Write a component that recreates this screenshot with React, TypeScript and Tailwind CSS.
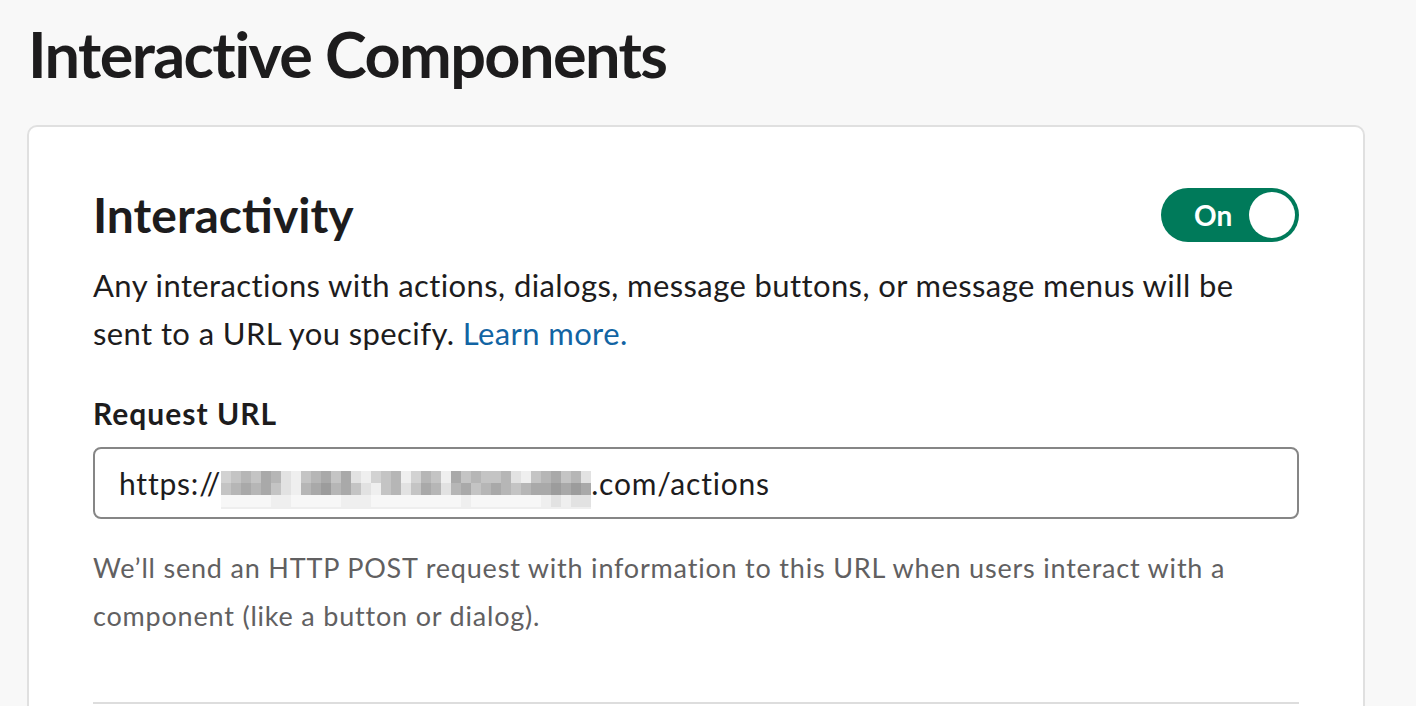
import React from 'react';

const shade: Record<string, string> = {
  a: 'bg-[#9c9c9c]',
  b: 'bg-[#a9a9a9]',
  c: 'bg-[#b6b6b6]',
  d: 'bg-[#c4c4c4]',
  e: 'bg-[#d2d2d2]',
  f: 'bg-[#e2e2e2]',
  g: 'bg-[#efefef]',
  h: 'bg-[#f7f7f7]',
  w: 'bg-white',
};

const mosaic = [
  'edcdbcfgdcbdbfgedcgecdgbdcddcfgdcbdcf',
  'dcbcbdfgcbacbdfgdcfdbcfcbdcbcdcbbabab',
  'hhhhhgghhhhhggghhhhhhhhhghhhhhhhgfgff',
];

function Blurred() {
  return (
    <span className="inline-flex flex-col self-start mt-[22px]">
      {mosaic.map((row, i) => (
        <span key={i} className="flex">
          {row.split('').map((c, j) => (
            <span key={j} className={`w-[10px] h-[12px] ${shade[c]}`} />
          ))}
        </span>
      ))}
      <span className="h-[2px] bg-[#eeeeee]" />
    </span>
  );
}

function Toggle() {
  return (
    <div className="flex items-center h-[54px] w-[138px] rounded-full bg-[#007a5a] pl-[33px] pr-[4px]">
      <span className="text-white font-bold text-[28px] leading-none">On</span>
      <span className="ml-auto w-[46px] h-[46px] rounded-full bg-white" />
    </div>
  );
}

export default function App() {
  return (
    <div className="min-h-screen bg-[#f8f8f8] pl-[27px] pr-[51px] pt-[16px] font-['Lato',sans-serif] text-[#1d1c1d]">
      <h1 className="text-[63px] font-bold leading-[76px] pl-[1px] tracking-[-1.6px]">Interactive Components</h1>
      <div className="mt-[33px] bg-white border-2 border-[#e0e0e0] rounded-[10px] px-[64px] pt-[60px] pb-[40px]">
        <div className="flex items-center justify-between">
          <h2 className="text-[48px] font-bold leading-[56px]">Interactivity</h2>
          <Toggle />
        </div>
        <p className="mt-[18px] text-[31px] leading-[48px] tracking-[0.4px]">
          Any interactions with actions, dialogs, message buttons, or message menus will be sent to a URL you specify.{' '}
          <a href="#" className="text-[#1264a3]">Learn more.</a>
        </p>
        <label className="block mt-[36px] text-[30px] font-bold leading-[40px] tracking-[1px]">Request URL</label>
        <div className="mt-[14px] h-[72px] border-2 border-[#868686] rounded-[8px] px-[24px] flex items-center text-[30px] tracking-[0.8px]">
          <span>https://</span>
          <Blurred />
          <span>.com/actions</span>
        </div>
        <p className="mt-[25px] text-[27px] leading-[48px] text-[#616061] tracking-[0.8px]">
          We’ll send an HTTP POST request with information to this URL when users interact with a component (like a button or dialog).
        </p>
        <div className="mt-[62px] h-[2px] bg-[#dddddd]" />
      </div>
    </div>
  );
}
